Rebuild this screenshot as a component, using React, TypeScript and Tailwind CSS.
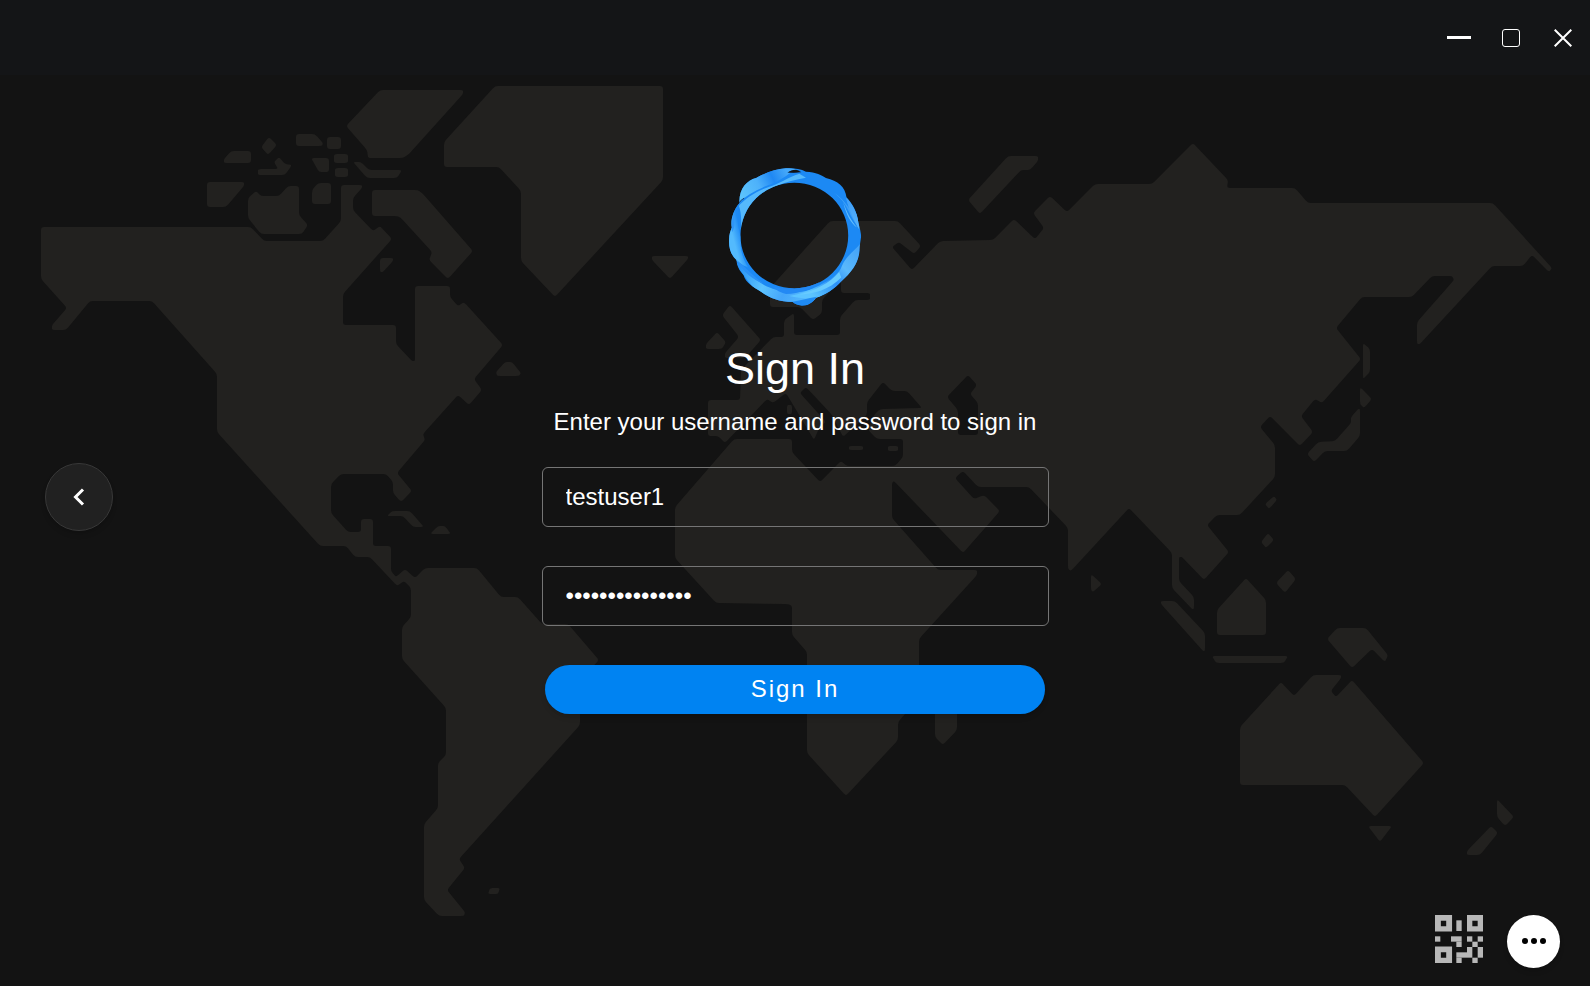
type Shape = string;

// Land outlines, "x,y" pairs on a 1590 x 986 canvas
const LAND: Shape[] = [
    // Americas
    '41,227 251,227 264,241 323,241 341,221 341,185 362,185 362,188 353,198 353,210 373,231 380,226 392,239 343,294 343,325 396,325 396,344 412,361 415,361 415,286 450,286 450,297 458,306 464,302 503,345 474,379 482,390 469,405 458,395 423,434 425,440 397,473 412,491 401,502 393,493 393,482 386,474 341,474 331,484 331,513 348,532 361,532 361,519 373,519 373,546 391,546 391,571 396,577 405,569 415,578 425,568 477,568 501,597 518,597 542,624 568,624 599,660 580,680 580,725 459,859 465,868 447,890 465,912 464,916 439,916 424,900 424,824 438,808 438,763 446,755 446,708 402,659 402,627 411,617 411,588 404,581 397,586 370,557 355,557 346,546 320,546 217,432 217,374 152,301 90,301 66,330 52,330 52,325 67,308 41,279',
    '207,182 244,182 244,186 226,207 207,207',
    '231,151 251,151 251,163 224,163 224,159',
    '269,137 277,145 268,155 261,147',
    '258,169 278,169 274,162 279,157 285,164 292,165 285,175 258,175',
    '296,134 315,134 323,143 322,146 296,146',
    '327,137 341,137 341,149 327,149',
    '311,158 329,158 329,172 319,172',
    '334,154 348,154 348,163 334,163',
    '335,168 348,168 348,177 335,177',
    '318,183 331,183 331,204 312,204 312,190',
    '248,198 256,191 261,196 279,196 288,186 299,186 299,215 308,225 302,234 261,234 248,218',
    '380,90 463,90 463,94 409,154 403,158 368,158 367,150 346,126',
    '353,162 361,162 369,170 402,170 397,178 367,178',
    '372,190 418,190 423,194 473,251 448,279 429,260 432,252 401,218 397,216 372,216',
    '380,258 393,258 393,261 383,272 380,272',
    '495,86 663,86 663,180 555,297 521,261 521,191 499,167 444,167 444,142',
    '652,256 688,256 688,259 670,279 652,260',
    '505,362 512,362 521,373 519,376 497,376 496,372',
    '392,511 410,511 424,527 413,527 403,516 387,516',
    '438,526 445,526 451,534 430,534',
    '490,888 500,888 498,894 488,894',
    // Europe, Asia and Africa
    '830,221 898,221 921,246 914,254 899,242 892,247 912,270 940,241 993,240 1014,219 1035,239 1044,228 1033,213 1050,196 1067,212 1095,184 1152,184 1193,143 1228,180 1227,188 1295,188 1308,203 1493,203 1552,268 1549,272 1532,255 1523,266 1492,266 1420,344 1417,344 1417,322 1454,280 1452,276 1432,276 1412,297 1362,297 1336,328 1361,359 1322,403 1315,399 1301,416 1313,432 1300,446 1270,416 1260,427 1275,445 1275,477 1240,515 1217,515 1207,525 1229,552 1204,580 1182,557 1179,557 1179,581 1194,597 1194,609 1192,609 1172,588 1172,553 1129,508 1071,571 1068,569 1068,528 1029,487 978,487 963,471 955,478 974,499 984,495 1000,511 963,553 894,481 892,483 892,518 938,570 977,570 977,575 919,639 919,698 898,722 898,740 846,796 807,753 807,652 792,635 792,606 788,604 716,603 675,558 675,507 734,439 792,439 792,452 820,482 841,461 847,466 895,466 903,457 903,439 877,439 868,430 874,415 880,409 922,408 907,391 892,391 883,382 867,402 867,415 843,437 832,415 806,387 800,393 826,422 820,426 814,440 786,393 773,403 767,399 725,443 718,436 708,436 708,400 740,400 741,370 773,337 784,337 784,320 794,313 794,335 840,335 840,317 855,300 870,300 870,293 841,293 841,280 822,300 822,313 813,320 800,307 770,307 770,288',
    '730,305 761,340 745,358 725,358 725,353 739,337 722,315',
    '717,332 726,342 722,349 706,349 706,344',
    '787,405 792,405 792,414 787,414',
    '849,446 863,446 863,450 849,450',
    '888,446 898,446 898,451 888,451',
    '935,700 957,700 957,730 943,745 935,737',
    '1008,156 1038,156 1038,161 1030,170 1021,170 980,214 968,200',
    '1363,343 1370,349 1370,372 1364,378 1363,378',
    '1360,387 1372,399 1364,408 1360,404',
    '1360,409 1360,436 1347,451 1325,451 1314,462 1307,454 1318,442 1335,441 1351,423 1351,417 1358,409',
    '1274,496 1277,500 1269,509 1265,504',
    '1268,533 1274,540 1266,548 1261,542',
    '1288,570 1296,579 1285,593 1276,583',
    '1246,578 1266,600 1266,635 1217,635 1217,610',
    '1161,601 1175,601 1205,633 1205,651 1203,651 1161,604',
    '1212,656 1288,656 1284,663 1216,663',
    '1091,574 1102,584 1093,592 1091,590',
    // Oceania
    '1337,628 1366,628 1388,655 1385,662 1372,649 1352,668 1327,639',
    '1281,682 1294,696 1313,675 1341,675 1341,678 1331,691 1336,697 1352,680 1424,763 1375,817 1345,785 1240,785 1240,727',
    '1368,826 1392,826 1380,842',
    '1497,799 1514,817 1505,826 1497,817',
    '1491,826 1498,833 1480,855 1467,855 1467,851',
];

// Inland seas cut back out of the land
const SEAS: Shape[] = [
    '968,375 977,385 970,394 978,403 978,435 958,435 958,410 947,397',
];

// Turns a list of corners into a closed path with softened corners
const toPath = (shape: Shape, radius = 3) => {
    const pts = shape.split(' ').map((p) => p.split(',').map(Number));
    const cmds = pts.map(([x, y], i) => {
        const near = ([tx, ty]: number[]) => {
            const len = Math.hypot(tx - x, ty - y) || 1;
            const t = Math.min(radius, len / 4) / len;
            return `${(x + (tx - x) * t).toFixed(1)} ${(y + (ty - y) * t).toFixed(1)}`;
        };
        const prev = pts[(i + pts.length - 1) % pts.length];
        const next = pts[(i + 1) % pts.length];
        return `${i === 0 ? 'M' : 'L'}${near(prev)}Q${x} ${y} ${near(next)}`;
    });
    return `${cmds.join('')}Z`;
};

const WorldMap = () => (
    <svg
        className="absolute inset-0 h-full w-full"
        viewBox="0 0 1590 986"
        preserveAspectRatio="xMidYMid slice"
        aria-hidden="true"
    >
        <path d={LAND.map((s) => toPath(s)).join('')} fill="#22211f" />
        <path d={SEAS.map((s) => toPath(s)).join('')} fill="#131313" />
    </svg>
);

const RING_OUTLINE =
    'M440 84C462 83 484 86 500 94C530 96 548 104 560 113C596 122 618 138 622 172C640 190 654 214 658 250C662 264 665 276 666 288C664 304 661 316 661 330C659 366 640 394 605 425C586 446 560 464 530 473C518 490 504 497 488 497C474 495 466 491 460 486C420 485 390 474 366 456C340 440 320 430 312 405C298 390 292 376 291 360C274 344 267 322 269 296C269 284 272 274 277 262C273 240 280 212 300 188C298 146 322 120 350 113C384 95 410 86 440 84ZM465 127A162 159 0 1 0 465 445A162 159 0 1 0 465 127Z';

const RingLogo = () => (
    <svg
        className="h-[138px] w-[134px]"
        viewBox="266 83 402 415"
        role="img"
        aria-label="Logo"
    >
        <defs>
            <clipPath id="ring">
                <path clipRule="evenodd" d={RING_OUTLINE} />
            </clipPath>
            <linearGradient id="topLeft" gradientUnits="userSpaceOnUse" x1="302" y1="160" x2="440" y2="90">
                <stop offset="0" stopColor="#5cc4fc" />
                <stop offset="0.4" stopColor="#4db1fa" />
                <stop offset="0.7" stopColor="#1f88f3" />
                <stop offset="1" stopColor="#45a8f9" />
            </linearGradient>
            <linearGradient id="left" gradientUnits="userSpaceOnUse" x1="268" y1="290" x2="306" y2="280">
                <stop offset="0.3" stopColor="#53bafd" />
                <stop offset="1" stopColor="#1e8af5" />
            </linearGradient>
            <linearGradient id="bottom" gradientUnits="userSpaceOnUse" x1="300" y1="370" x2="540" y2="480">
                <stop offset="0" stopColor="#2490f6" />
                <stop offset="0.35" stopColor="#5dc4ff" />
                <stop offset="0.6" stopColor="#45a6fa" />
                <stop offset="1" stopColor="#5cc2fe" />
            </linearGradient>
            <linearGradient id="bottomRight" gradientUnits="userSpaceOnUse" x1="655" y1="330" x2="520" y2="465">
                <stop offset="0" stopColor="#46a5f8" />
                <stop offset="0.35" stopColor="#5ab8fc" />
                <stop offset="0.6" stopColor="#2b8ff7" />
                <stop offset="1" stopColor="#5cc4ff" />
            </linearGradient>
            <linearGradient id="right" gradientUnits="userSpaceOnUse" x1="625" y1="180" x2="655" y2="270">
                <stop offset="0" stopColor="#3f9ff7" />
                <stop offset="1" stopColor="#5ab4fb" />
            </linearGradient>
        </defs>
        <g clipPath="url(#ring)">
            <path fill="#1c89f4" d="M260 80H670V500H260Z" />
            <path fill="url(#topLeft)" d="M296 188C296 120 340 90 440 80L470 86C440 106 420 124 384 136C350 148 320 166 296 188Z" />
            <path fill="#55b9fc" d="M298 196C320 172 356 150 388 140C420 130 444 112 480 100L500 112C470 118 440 124 410 138C350 162 316 212 304 270C306 240 306 218 298 196Z" />
            <path fill="url(#left)" d="M302 186C288 230 296 262 304 290C302 330 308 352 326 382C300 372 260 350 262 300C262 240 280 204 302 186Z" />
            <path fill="#2f95f8" d="M284 222C284 246 288 260 278 276C276 256 276 240 284 222Z" />
            <path fill="url(#bottom)" d="M292 368C330 396 350 430 400 446C440 460 480 460 520 448L560 440L540 480C500 484 460 486 440 486C380 484 340 446 318 412C306 396 296 384 292 368Z" />
            <path fill="#2b91f7" d="M290 358C314 376 336 404 372 430C340 420 310 394 290 358Z" />
            <path fill="#2389f4" d="M400 440C440 448 480 446 520 430L548 420C520 446 480 462 440 462C424 458 410 450 400 440Z" />
            <path fill="url(#bottomRight)" d="M662 312C648 330 618 350 608 378C600 402 572 420 540 436C512 450 484 462 450 468C480 476 510 476 530 474C600 450 664 400 662 312Z" />
            <path fill="#68cbff" d="M600 396C570 430 530 450 480 464C520 462 570 450 606 412Z" />
            <path fill="#1f8bf4" d="M460 486C490 478 520 472 534 470L510 500H470Z" />
            <path fill="#3da0f8" d="M582 156C604 172 618 190 628 212C640 238 650 250 660 266L664 240L622 170C622 184 626 192 630 204C614 180 600 168 582 156Z" />
            <path fill="url(#right)" d="M620 172C640 190 658 220 660 268C646 246 630 210 620 172Z" />
            <path fill="#62bdfc" d="M612 186C622 214 634 240 654 262C636 252 620 222 612 186Z" />
            <path fill="#123a66" d="M444 97C462 84 478 88 486 96C470 99 456 99 444 97Z" />
            <path fill="#131313" d="M449 95C462 86 474 88 482 94C470 97 458 97 449 95Z" />
            <path fill="none" stroke="#123a66" strokeWidth="3" d="M298 188C304 180 308 178 314 174" />
        </g>
    </svg>
);

// Filled cells of the QR glyph, [column, row, width, height]
const QR_CELLS = [
    [4, 1, 1, 2],
    [0, 4, 1, 1],
    [3, 4, 2, 1],
    [4, 5, 1, 1],
    [6, 4, 1, 1],
    [8, 4, 1, 1],
    [7, 5, 1, 1],
    [6, 6, 1, 2],
    [8, 6, 1, 2],
    [4, 7, 2, 1],
    [4, 8, 1, 1],
    [7, 8, 1, 1],
];

const QrIcon = () => (
    <svg className="h-12 w-12" viewBox="0 0 9 9" fill="#b8b8b8" aria-hidden="true">
        <path
            fillRule="evenodd"
            d="M0 0h3.2v3.1h-3.2zM1.1 1.1v1h1v-1zM6 0h3v3.1h-3zM7 1.1v1h1v-1zM0 5.9h3.2v3.1h-3.2zM1.1 7v1h1v-1z"
        />
        {QR_CELLS.map(([x, y, w, h]) => (
            <rect key={`${x}-${y}`} x={x} y={y} width={w} height={h} />
        ))}
    </svg>
);

const WindowBar = () => (
    <header className="relative flex h-[75px] items-center justify-end gap-7 bg-[#141517] pr-[15px] text-white">
        <button type="button" aria-label="Minimize" className="flex h-6 w-6 items-center justify-center">
            <span className="h-[3px] w-6 bg-white" />
        </button>
        <button type="button" aria-label="Maximize" className="flex h-6 w-6 items-center justify-center">
            <span className="h-[18px] w-[18px] rounded-[3px] border border-white" />
        </button>
        <button type="button" aria-label="Close" className="flex h-6 w-6 items-center justify-center">
            <svg className="h-[18px] w-[18px]" viewBox="0 0 18 18" stroke="currentColor" strokeWidth="2" aria-hidden="true">
                <path d="M.7.7l16.6 16.6M17.3.7L.7 17.3" />
            </svg>
        </button>
    </header>
);

const inputClass =
    'h-[60px] w-full rounded-md border border-[#757575] bg-transparent px-[23px] text-[24px] text-white outline-none';

export default function App() {
    return (
        <div className="relative flex min-h-screen flex-col overflow-hidden bg-[#131313] font-['Liberation_Sans',Arial,sans-serif] text-white">
            <WorldMap />
            <WindowBar />

            <main className="relative grid flex-1 grid-cols-[1fr_minmax(0,507px)_1fr]">
                <div className="flex items-center pt-1 pl-[45px]">
                    <button
                        type="button"
                        aria-label="Back"
                        className="flex h-[68px] w-[68px] items-center justify-center rounded-full border border-[#383838] bg-[#212121] shadow-md"
                    >
                        <svg className="h-[18px] w-3" viewBox="0 0 12 18" fill="none" stroke="currentColor" strokeWidth="3" aria-hidden="true">
                            <path d="M10 1.5L2.5 9l7.5 7.5" />
                        </svg>
                    </button>
                </div>

                <form className="flex flex-col items-center pt-[93px]" onSubmit={(e) => e.preventDefault()}>
                    <RingLogo />
                    <h1 className="mt-9 text-[45px] leading-[54px]">Sign In</h1>
                    <p className="mt-2 text-[24px] leading-9 whitespace-nowrap">
                        Enter your username and password to sign in
                    </p>
                    <div className="mt-[27px] flex w-full flex-col items-center gap-[39px]">
                        <input
                            type="text"
                            aria-label="Username"
                            defaultValue="testuser1"
                            className={inputClass}
                        />
                        <input
                            type="password"
                            aria-label="Password"
                            defaultValue="testpassword123"
                            className={inputClass}
                        />
                        <button
                            type="submit"
                            className="h-[49px] w-full max-w-[500px] rounded-full bg-[#0083f2] pb-0.5 text-[24px] tracking-[2px] shadow-md"
                        >
                            Sign In
                        </button>
                    </div>
                </form>
            </main>

            <footer className="relative flex items-start justify-end gap-6 pr-[30px] pb-[18px]">
                <button type="button" aria-label="Show QR code">
                    <QrIcon />
                </button>
                <button
                    type="button"
                    aria-label="More options"
                    className="flex h-[53px] w-[53px] items-center justify-center rounded-full bg-white pb-0.5 text-black shadow-md"
                >
                    <svg className="h-[6px] w-6" viewBox="0 0 24 6" fill="currentColor" aria-hidden="true">
                        <circle cx="3" cy="3" r="3" />
                        <circle cx="12" cy="3" r="3" />
                        <circle cx="21" cy="3" r="3" />
                    </svg>
                </button>
            </footer>
        </div>
    );
}
